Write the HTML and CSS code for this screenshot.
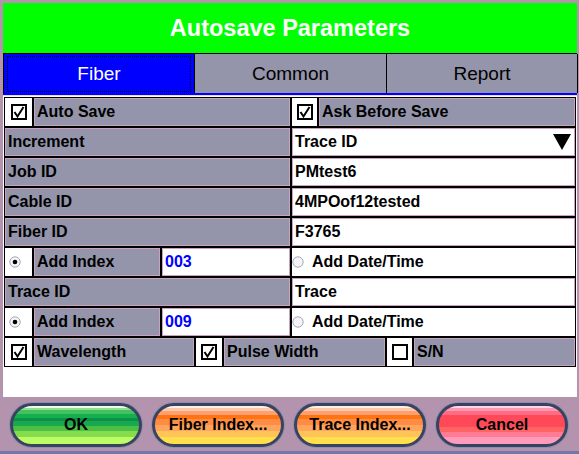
FILE: index.html
```html
<!DOCTYPE html>
<html lang="en">
  <head>
    <meta charset="UTF-8" />
    <title>Autosave Parameters</title>
    <link rel="stylesheet" href="styles.css">
  </head>
  <body>
    <div class="screen">
      <div class="title">Autosave Parameters</div>

      <div class="tabs">
        <div class="tab active">Fiber</div>
        <div class="tab">Common</div>
        <div class="tab">Report</div>
      </div>

      <div class="panel">
        <div class="grid">
          <div class="row">
            <div class="half">
              <div class="box"><svg class="chk" viewBox="0 0 16 16"><rect x="1" y="1" width="14" height="14" /><path d="M3.5 8 L6.5 12.5 L12.5 3" /></svg></div>
              <div class="lbl grow">Auto Save</div>
            </div>
            <div class="half right">
              <div class="box small"><svg class="chk" viewBox="0 0 16 16"><rect x="1" y="1" width="14" height="14" /><path d="M3.5 8 L6.5 12.5 L12.5 3" /></svg></div>
              <div class="lbl grow">Ask Before Save</div>
            </div>
          </div>

          <div class="row">
            <div class="lbl half">Increment</div>
            <div class="val half right select">
              <span>Trace ID</span>
              <svg class="arrow" viewBox="0 0 18 16"><polygon points="0,0 18,0 9,16" /></svg>
            </div>
          </div>

          <div class="row">
            <div class="lbl half">Job ID</div>
            <div class="val half right">PMtest6</div>
          </div>

          <div class="row">
            <div class="lbl half">Cable ID</div>
            <div class="val half right">4MPOof12tested</div>
          </div>

          <div class="row">
            <div class="lbl half">Fiber ID</div>
            <div class="val half right">F3765</div>
          </div>

          <div class="row">
            <div class="half">
              <div class="box radio-box"><svg class="radio" viewBox="0 0 12 12"><circle cx="6" cy="6" r="5.2" /><circle class="dot" cx="6" cy="6" r="2.3" /></svg></div>
              <div class="lbl idx-lbl">Add Index</div>
              <div class="val grow num">003</div>
            </div>
            <div class="plain half right">
              <svg class="radio" viewBox="0 0 12 12"><circle cx="6" cy="6" r="5.2" /></svg>
              <span>Add Date/Time</span>
            </div>
          </div>

          <div class="row">
            <div class="lbl half">Trace ID</div>
            <div class="val half right">Trace</div>
          </div>

          <div class="row">
            <div class="half">
              <div class="box radio-box"><svg class="radio" viewBox="0 0 12 12"><circle cx="6" cy="6" r="5.2" /><circle class="dot" cx="6" cy="6" r="2.3" /></svg></div>
              <div class="lbl idx-lbl">Add Index</div>
              <div class="val grow num">009</div>
            </div>
            <div class="plain half right">
              <svg class="radio" viewBox="0 0 12 12"><circle cx="6" cy="6" r="5.2" /></svg>
              <span>Add Date/Time</span>
            </div>
          </div>

          <div class="row">
            <div class="box"><svg class="chk" viewBox="0 0 16 16"><rect x="1" y="1" width="14" height="14" /><path d="M3.5 8 L6.5 12.5 L12.5 3" /></svg></div>
            <div class="lbl wl">Wavelength</div>
            <div class="box pw-box"><svg class="chk" viewBox="0 0 16 16"><rect x="1" y="1" width="14" height="14" /><path d="M3.5 8 L6.5 12.5 L12.5 3" /></svg></div>
            <div class="lbl pw">Pulse Width</div>
            <div class="box sn-box"><svg class="chk" viewBox="0 0 16 16"><rect x="1" y="1" width="14" height="14" /></svg></div>
            <div class="lbl grow">S/N</div>
          </div>
        </div>
      </div>

      <div class="buttons">
        <button class="btn ok" type="button">OK</button>
        <button class="btn orange" type="button">Fiber Index...</button>
        <button class="btn orange" type="button">Trace Index...</button>
        <button class="btn cancel" type="button">Cancel</button>
      </div>
    </div>
    <div class="strip"></div>
  </body>
</html>
```

FILE: styles.css
```css
* {
  margin: 0;
  padding: 0;
  box-sizing: border-box;
}

body {
  width: 579px;
  height: 454px;
  overflow: hidden;
  background: #b393ad;
  font-family: "Liberation Sans", Arial, sans-serif;
  color: #000;
}

.screen {
  padding: 3px 2px 0 3px;
  height: 451px;
}

.title {
  height: 50px;
  background: #00ff00;
  color: #fff;
  font-weight: bold;
  font-size: 23.5px;
  display: flex;
  align-items: center;
  justify-content: center;
}

.tabs {
  display: grid;
  grid-template-columns: 191px 192px 191px;
  height: 42px;
  border-top: 1px solid #000;
  border-left: 1px solid #000;
  border-bottom: 2px solid #0000ff;
}

.tab {
  position: relative;
  background: #9494aa;
  border-right: 1px solid #000;
  font-size: 19px;
  display: flex;
  align-items: center;
  justify-content: center;
}

.tab.active {
  background: #0000ff;
  color: #fff;
}

/* focus rectangle */
.tab.active::after {
  content: '';
  position: absolute;
  top: 2px;
  left: 3px;
  right: 3px;
  bottom: 1px;
  border: 1px dotted #000;
}

.panel {
  height: 302px;
  background: #fff;
  border-top: 1px solid #e6d8e4;
  padding: 1px;
}

.grid {
  background: #000;
  padding: 1px;
  display: flex;
  flex-direction: column;
  gap: 2px;
}

.row {
  display: flex;
  gap: 2px;
  height: 28px;
}

.half {
  width: 285px;
  display: flex;
  gap: 2px;
}

.half.right {
  width: 283px;
}

.grow {
  flex: 1;
}

.lbl {
  background: #9494aa;
  border: 1px solid #c9a3bd;
  font-weight: bold;
  font-size: 16px;
  padding-left: 2px;
  display: flex;
  align-items: center;
  white-space: nowrap;
}

.val {
  background: #fff;
  border: 1px solid #c9a3bd;
  font-weight: bold;
  font-size: 16px;
  padding-left: 2px;
  display: flex;
  align-items: center;
}

.val.num {
  color: #0000ff;
}

.select {
  justify-content: space-between;
  padding-right: 3px;
}

.arrow {
  width: 18px;
  height: 16px;
  fill: #000;
}

.box {
  width: 27px;
  flex: none;
  background: #fff;
  display: flex;
  align-items: center;
  justify-content: center;
}

.box.small {
  width: 25px;
}

.radio-box {
  justify-content: flex-start;
  padding-left: 4px;
}

.idx-lbl {
  width: 126px;
}

.wl {
  width: 160px;
}

.pw-box {
  width: 26px;
}

.pw {
  width: 161px;
}

.sn-box {
  width: 25px;
}

.chk {
  width: 16px;
  height: 16px;
}

.chk rect {
  fill: #fff;
  stroke: #000;
  stroke-width: 2;
}

.chk path {
  fill: none;
  stroke: #000;
  stroke-width: 2;
}

.radio {
  width: 12px;
  height: 12px;
  flex: none;
}

.radio circle {
  fill: #f4f4f8;
  stroke: #a8a8b8;
  stroke-width: 1;
}

.radio circle.dot {
  fill: #000;
  stroke: none;
}

.plain {
  background: #fff;
  align-items: center;
  gap: 8px;
  font-weight: bold;
  font-size: 16px;
}

.buttons {
  display: flex;
  gap: 10px;
  padding: 6px 0 0 7px;
}

.btn {
  width: 132px;
  height: 44px;
  border: 3px solid #3a4262;
  border-radius: 22px;
  box-shadow: 0 0 0 1px #8c90aa;
  font-family: "Liberation Sans", Arial, sans-serif;
  font-weight: bold;
  font-size: 16px;
  color: #000;
}

.ok {
  background: linear-gradient(to bottom,
    #e8ffe8 0, #e8ffe8 2px,
    #8ee08e 2px, #8ee08e 4px,
    #44c060 4px, #44c060 8px,
    #14b050 8px, #14b050 12px,
    #0c9048 12px, #0c9048 15px,
    #18a84e 15px, #18a84e 20px,
    #4cc044 20px, #4cc044 25px,
    #86dc4c 25px, #86dc4c 31px,
    #bcfc64 31px);
}

.orange {
  background: linear-gradient(to bottom,
    #fff0e8 0, #fff0e8 2px,
    #ffc8a8 2px, #ffc8a8 5px,
    #ffa070 5px, #ffa070 9px,
    #ff7410 9px, #ff7410 13px,
    #ff8c44 13px, #ff8c44 19px,
    #ffa45c 19px, #ffa45c 25px,
    #ffc458 25px, #ffc458 31px,
    #ffe04c 31px);
}

.cancel {
  background: linear-gradient(to bottom,
    #ffd8e4 0, #ffd8e4 2px,
    #ff98b4 2px, #ff98b4 5px,
    #ff6c84 5px, #ff6c84 9px,
    #ff4858 9px, #ff4858 21px,
    #ff6464 21px, #ff6464 26px,
    #ff7c94 26px, #ff7c94 31px,
    #ff9cbc 31px);
}

.strip {
  height: 3px;
  background: #7676a8;
}
```
